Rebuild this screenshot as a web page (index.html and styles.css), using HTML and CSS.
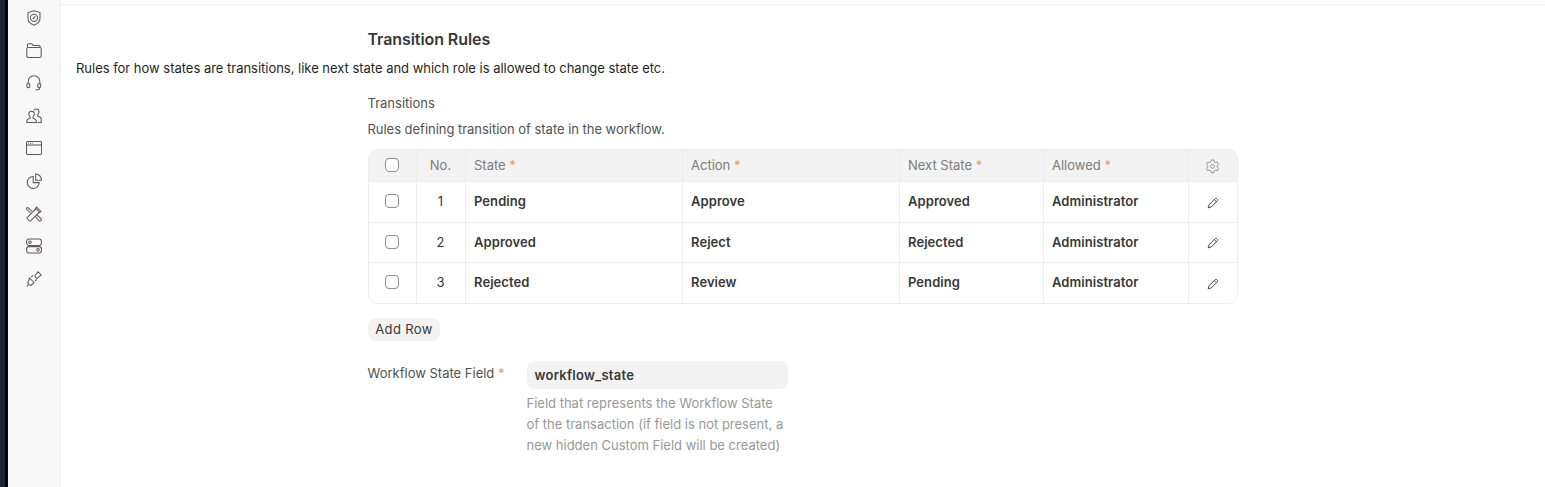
FILE: index.html
```html
<!DOCTYPE html>
<html lang="en">
<head>
<meta charset="utf-8">
<title>Transition Rules</title>
<link rel="stylesheet" href="styles.css">
</head>
<body>
<div class="app">
  <div class="edge"></div>
  <aside class="rail">
    <svg class="ico" viewBox="0 0 16 16"><path d="M8 .8 14 2.600V8c0 3.400-2.400 5.900-6 7.200C4.400 13.900 2 11.400 2 8V2.600Z"/><circle cx="8" cy="7.800" r="3.600"/><path d="m6.600 8.900 2.800-2.400"/></svg>
    <svg class="ico" viewBox="0 0 16 16"><path d="M1.500 4.500V1.800a1 1 0 0 1 1-1h3.300l1.500 1.700h5.800a1 1 0 0 1 1 1v1"/><rect x=".8" y="4.500" width="14.400" height="10" rx="1.500"/></svg>
    <svg class="ico" viewBox="0 0 16 16"><path d="M2.200 9V6.500a5.800 5.800 0 0 1 11.600 0V9"/><rect x=".8" y="8.400" width="3" height="4.200" rx="1.400"/><rect x="11.700" y="8.400" width="3" height="4.200" rx="1.400"/><path d="M13.400 12.600v1.200a1 1 0 0 1-1 1H9.500"/></svg>
    <svg class="ico" viewBox="0 0 16 16"><path d="M.8 14.500V13c0-1.500 1.300-2.200 3-2.800.7-.3.500-1-.1-1.700C3 7.700 2.800 6.800 2.800 6c0-1.700 1-2.800 2.700-2.800S8.300 4.300 8.300 6c0 .8-.2 1.700-.9 2.500-.6.700-.8 1.400-.1 1.700 1.700.6 3 1.300 3 2.800v1.500Z"/><path d="M7.800 2.600C8.300 1.600 9.100 1 10.200 1c1.700 0 2.700 1.100 2.700 2.800 0 .8-.2 1.700-.9 2.500-.6.700-.8 1.400-.1 1.700 1.600.6 3.300 1.300 3.300 2.800v3.700h-3.500"/></svg>
    <svg class="ico" viewBox="0 0 16 16"><rect x=".5" y="1.500" width="15" height="13" rx="1"/><path d="M.5 5h15"/><path d="M2.200 3.300h.8M4 3.300h.8M5.800 3.300h.8"/></svg>
    <svg class="ico" viewBox="0 0 16 16"><path d="M7.200 3.400a6 6 0 1 0 6 6.200H7.200Z"/><path d="M9.700.9v6.300H15.500A6.100 6.100 0 0 0 9.700.9Z"/></svg>
    <svg class="ico" viewBox="0 0 16 16"><path d="M10 2.600 13.400 6 4.800 14.700a1.200 1.200 0 0 1-1.700 0l-1.700-1.700a1.200 1.200 0 0 1 0-1.700Z"/><path d="M8.600 4 10.500 1l4.500 4.500-3 2"/><path d="M6 5.500 2.300 1.800a1 1 0 0 0-1.500 0 1 1 0 0 0 0 1.500L4.500 7M9 10l3.800 4.700a1.500 1.500 0 0 0 2.100 0 1.500 1.500 0 0 0 0-2.100L10.500 8.500"/></svg>
    <svg class="ico" viewBox="0 0 16 16"><rect x=".6" y="1" width="14.800" height="6.400" rx="2.400"/><rect x=".6" y="8.600" width="14.800" height="6.400" rx="2.400"/><circle cx="4" cy="4.200" r="1.300"/><circle cx="12" cy="11.800" r="1.300"/></svg>
    <svg class="ico" viewBox="0 0 16 16"><path d="M9.400 4.200 12 .8l3.200 3.200-3.400 2.800a1.200 1.200 0 0 1-1.600 0L9.300 5.900a1.200 1.200 0 0 1 .1-1.700Z"/><path d="M3.600 7 8 11.400 6 13.500c-1.100.9-2.500.8-3.400-.1s-1-2.300-.1-3.400Z"/><path d="m2.500 13.500-1.800 2M5.200 6.200 7 4.400M9 10.200 10.800 8.400"/></svg>
  </aside>
  <main class="main">
    <div class="section">
      <div class="col">
        <h2 class="title">Transition Rules</h2>
      </div>
      <p class="desc">Rules for how states are transitions, like next state and which role is allowed to change state etc.</p>
      <div class="col">
        <div class="label">Transitions</div>
        <p class="help">Rules defining transition of state in the workflow.</p>
        <div class="grid">
          <div class="row head">
            <div class="cell c-check"><span class="check"></span></div>
            <div class="cell c-no">No.</div>
            <div class="cell c-state">State <span class="req">*</span></div>
            <div class="cell c-action">Action <span class="req">*</span></div>
            <div class="cell c-next">Next State <span class="req">*</span></div>
            <div class="cell c-allowed">Allowed <span class="req">*</span></div>
            <div class="cell c-edit"><svg class="gear" viewBox="0 0 16 16"><path d="M6.700 1h2.600l.4 2 1.500.9 2-.6 1.300 2.300-1.500 1.400v1.700l1.500 1.400-1.300 2.300-2-.6-1.500.9-.4 2H6.700l-.4-2-1.500-.9-2 .6-1.300-2.300 1.500-1.400V7L1.500 5.600l1.300-2.300 2 .6 1.500-.9Z"/><circle cx="8" cy="7.900" r="2"/></svg></div>
          </div>
          <div class="row">
            <div class="cell c-check"><span class="check"></span></div>
            <div class="cell c-no">1</div>
            <div class="cell c-state val">Pending</div>
            <div class="cell c-action val">Approve</div>
            <div class="cell c-next val">Approved</div>
            <div class="cell c-allowed val">Administrator</div>
            <div class="cell c-edit"><svg class="pen" viewBox="0 0 12 12"><path d="M1.200 10.800 2 7.800 8.200 1.600a1.100 1.100 0 0 1 1.500 0l.7.700a1.100 1.100 0 0 1 0 1.500L4.200 10Z"/><path d="M7.300 2.500l2.200 2.200"/></svg></div>
          </div>
          <div class="row">
            <div class="cell c-check"><span class="check"></span></div>
            <div class="cell c-no">2</div>
            <div class="cell c-state val">Approved</div>
            <div class="cell c-action val">Reject</div>
            <div class="cell c-next val">Rejected</div>
            <div class="cell c-allowed val">Administrator</div>
            <div class="cell c-edit"><svg class="pen" viewBox="0 0 12 12"><path d="M1.200 10.800 2 7.800 8.200 1.600a1.100 1.100 0 0 1 1.500 0l.7.700a1.100 1.100 0 0 1 0 1.500L4.200 10Z"/><path d="M7.300 2.500l2.200 2.200"/></svg></div>
          </div>
          <div class="row">
            <div class="cell c-check"><span class="check"></span></div>
            <div class="cell c-no">3</div>
            <div class="cell c-state val">Rejected</div>
            <div class="cell c-action val">Review</div>
            <div class="cell c-next val">Pending</div>
            <div class="cell c-allowed val">Administrator</div>
            <div class="cell c-edit"><svg class="pen" viewBox="0 0 12 12"><path d="M1.200 10.800 2 7.800 8.200 1.600a1.100 1.100 0 0 1 1.500 0l.7.700a1.100 1.100 0 0 1 0 1.500L4.200 10Z"/><path d="M7.300 2.500l2.200 2.200"/></svg></div>
          </div>
        </div>
        <button class="add">Add Row</button>
        <div class="field">
          <div class="field-label">Workflow State Field <span class="req">*</span></div>
          <div class="field-body">
            <div class="input">workflow_state</div>
            <p class="note">Field that represents the Workflow State of the transaction (if field is not present, a new hidden Custom Field will be created)</p>
          </div>
        </div>
      </div>
    </div>
  </main>
</div>
</body>
</html>
```
FILE: styles.css
```css
* { box-sizing: border-box; }
html, body { margin: 0; height: 487px; overflow: hidden; background: #fff; }
body { font-family: Inter, "Liberation Sans", sans-serif; color: #383838; font-size: 13px; }
.app { display: flex; height: 487px; }
.edge { width: 8px; flex: none; background: linear-gradient(90deg, #1f2733 0 5px, #05070c 5px); }
.rail {
  width: 53px; flex: none; background: #f8f8f8; border-right: 1px solid #ededed;
  display: flex; flex-direction: column; align-items: center; padding-top: 10px; gap: 16.6px;
}
.ico { width: 16px; height: 16px; flex: none; fill: none; stroke: #5f5a58; stroke-width: 1.05; margin-left: -1px; }
.main { flex: 1; min-width: 0; }
.section { border-top: 1px solid #ededed; margin-top: 4px; padding: 24px 0 0 15px; }
.col { margin-left: 292px; width: 870px; }
.title { margin: 0 0 0 -.5px; font-size: 16px; line-height: 21px; font-weight: 600; color: #383838; letter-spacing: -.08px; }
.desc { margin: 9px 0 0; font-size: 13px; line-height: 18px; color: #1f1f1f; letter-spacing: -.02px; }
.label { margin-top: 17px; margin-left: -.5px; font-size: 13px; line-height: 18px; color: #525252; }
.help { margin: 8px 0 0 -.5px; font-size: 13px; line-height: 18px; color: #525252; letter-spacing: -.03px; }
.grid { margin-top: 11px; border: 1px solid #ededed; border-radius: 10px; overflow: hidden; }
.row { display: flex; height: 40.5px; border-top: 1px solid #ededed; }
.row.head { height: 31px; border-top: 0; background: #f3f3f3; color: #7c7c7c; }
.cell { border-left: 1px solid #ededed; padding: 0 7px 1px 8px; display: flex; align-items: center; white-space: pre; }
.cell:first-child { border-left: 0; }
.c-check { width: 47px; justify-content: center; padding: 0 2px 1px 0; }
.c-no { width: 49px; justify-content: center; padding: 0 8px 1px 7px; }
.c-state { width: 217px; }
.c-action { width: 217px; }
.c-next { width: 144px; }
.c-allowed { width: 145px; }
.c-edit { width: 49px; justify-content: center; padding: 0; }
.val { font-weight: 600; color: #383838; letter-spacing: .005em; }
.req { color: #d8a06f; }
.check { width: 14px; height: 14px; border: 1px solid #8e8e8e; border-radius: 4px; background: #fff; display: block; }
.gear { width: 15px; height: 15px; fill: none; stroke: #8e8e8e; stroke-width: 1; margin-top: 2px; margin-right: 1px; }
.pen { width: 12px; height: 12px; fill: none; stroke: #4a4a4a; stroke-width: 1; margin-top: 2px; }
.add {
  display: block; margin-top: 14px; height: 23px; width: 72px; padding: 0; border: 0; border-radius: 8px;
  background: #f3f3f3; color: #383838; font: inherit; letter-spacing: .03em; cursor: pointer;
}
.field { display: flex; margin-top: 20px; }
.field-label { width: 159px; padding-top: 3px; margin-left: -.5px; line-height: 18px; color: #525252; }
.field-body { width: 261px; }
.input { height: 28px; border-radius: 8px; background: #f3f3f3; padding: 0 8px; display: flex; align-items: center; font-weight: 600; color: #383838; letter-spacing: .02em; }
.note { margin: 4px 0 0; font-size: 13px; line-height: 21px; color: #999; }
```
